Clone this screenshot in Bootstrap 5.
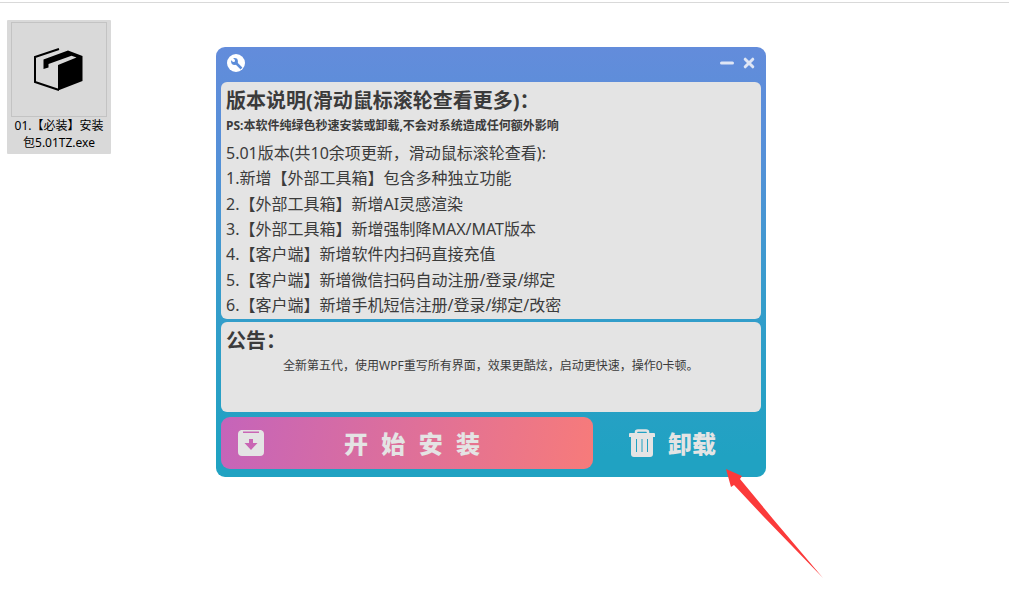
<!DOCTYPE html>
<html lang="zh-CN">
<head>
<meta charset="utf-8">
<meta name="viewport" content="width=device-width, initial-scale=1">
<title>安装程序</title>
<link href="https://cdn.jsdelivr.net/npm/bootstrap@5.3.0/dist/css/bootstrap.min.css" rel="stylesheet">
<style>
body { font-family: "Noto Sans", "Noto Sans CJK SC", sans-serif; color: #3b3b3b; background: #fff; padding-top: 2px; }
.desktop { border-top: 1px solid #d9d9d9; padding: 17px 7px; }
.desk-file { width: 104px; background: #d9d9d9; color: #000; font-size: 12px; line-height: 17px; padding: 2px 4px 3px; border-radius: 1px; }
.desk-file:hover { color: #000; }
.file-thumb { height: 95px; border: 1px solid #c3c3c3; }
.file-area { width: 209px; }
.installer { max-width: 550px; margin-top: 27px; padding: 0 5px 8px; border-radius: 9px; background: linear-gradient(#638cdb, #5590d8 25%, #349dcb 60%, #20a2c2 95%); }
.title-bar { height: 35px; padding: 0 1px 4px 6px; }
.win-btn { width: 22px; height: 22px; }
.pane { background: #e4e4e4; border-radius: 6px; padding: 5px 5px 0; }
.notes { height: 237px; margin-bottom: 3px; }
.notice { height: 90px; margin-bottom: 5px; }
.pane h1, .pane h2 { font-size: 20px; line-height: 28px; font-weight: 700; margin: 0; }
.promise { font-size: 12px; line-height: 22px; font-weight: 700; margin: 0 0 4px; }
.changes { font-size: 16px; line-height: 25px; height: 177px; }
.notice p { font-size: 12px; line-height: 18px; margin: 2px 0 0 57px; }
.act { height: 52px; border: 0; border-radius: 9px; color: #e4e4e4; font-family: "Liberation Sans", "Noto Sans CJK SC", sans-serif; font-size: 24px; line-height: 30px; font-weight: 900; }
.act:hover { color: #fff; }
.act-label { padding-top: 3px; }
.act-install { background: linear-gradient(100deg, #c564ba, #f77b7a); padding: 0 17px; }
.act-remove { padding: 0 45px 0 36px; gap: 13px; }
.pointer { left: 510px; top: 422px; pointer-events: none; }
</style>
</head>
<body class="d-flex flex-column min-vh-100">
<main class="desktop d-flex align-items-start flex-grow-1">
  <div class="file-area flex-shrink-0">
    <a href="#" class="desk-file d-block text-center text-decoration-none">
      <span class="file-thumb d-flex align-items-center justify-content-center">
        <svg width="52" height="46" viewBox="0 0 52 46" aria-hidden="true">
          <path d="M26 2 2 10V35L26 43" fill="none" stroke="#000" stroke-width="2"/>
          <path d="M10.500 12.500 35 3.500 49.500 9V34L25 43.500V18L43.500 10.500 38.500 8.800 15.500 17V20.500L10.500 22Z" fill="#000"/>
        </svg>
      </span>
      <span class="d-block">01.【必装】安装<br>包5.01TZ.exe</span>
    </a>
  </div>
  <section class="installer position-relative w-100">
    <header class="title-bar d-flex align-items-center">
      <svg class="me-auto" width="18" height="18" viewBox="0 0 18 18" aria-hidden="true">
        <circle cx="9" cy="9" r="9" fill="#fff"/>
        <circle cx="7.500" cy="7.500" r="3.400" fill="#5d8dd9"/>
        <path d="M8 8 14.500 14.500" stroke="#5d8dd9" stroke-width="2.500"/>
        <path d="M2.500 4.500 4.500 2.500 8 6 7.800 7.800 6 8Z" fill="#fff"/>
      </svg>
      <button type="button" class="win-btn btn p-0 border-0 d-flex align-items-center justify-content-center" aria-label="最小化">
        <svg width="14" height="12" viewBox="0 0 14 12"><path d="M1.500 6H12.500" stroke="#dfe6f5" stroke-width="3" stroke-linecap="round"/></svg>
      </button>
      <button type="button" class="win-btn btn p-0 border-0 d-flex align-items-center justify-content-center" aria-label="关闭">
        <svg width="12" height="12" viewBox="0 0 12 12"><path d="M2.200 2.200 9.800 9.800M9.800 2.200 2.200 9.800" stroke="#dfe6f5" stroke-width="3" stroke-linecap="round"/></svg>
      </button>
    </header>
    <article class="pane notes">
      <h1>版本说明(滑动鼠标滚轮查看更多)：</h1>
      <p class="promise">PS:本软件纯绿色秒速安装或卸载,不会对系统造成任何额外影响</p>
      <div class="changes d-flex flex-column justify-content-between">
        <div>5.01版本(共10余项更新，滑动鼠标滚轮查看):</div>
        <div>1.新增【外部工具箱】包含多种独立功能</div>
        <div>2.【外部工具箱】新增AI灵感渲染</div>
        <div>3.【外部工具箱】新增强制降MAX/MAT版本</div>
        <div>4.【客户端】新增软件内扫码直接充值</div>
        <div>5.【客户端】新增微信扫码自动注册/登录/绑定</div>
        <div>6.【客户端】新增手机短信注册/登录/绑定/改密</div>
      </div>
    </article>
    <article class="pane notice">
      <h2>公告：</h2>
      <p>全新第五代，使用WPF重写所有界面，效果更酷炫，启动更快速，操作0卡顿。</p>
    </article>
    <div class="row g-0">
      <div class="col">
        <button type="button" class="act act-install btn w-100 d-flex align-items-center">
          <svg width="26" height="26" viewBox="0 0 26 26" aria-hidden="true">
            <path fill="#e4e4e4" fill-rule="evenodd" d="M3 0H23Q26 1 26 4V22Q26 26 22 26H4Q0 26 0 22V4Q0 1 3 0ZM5 1.500V3H21V1.500ZM11 9V13H6.500L13 20 19.500 13H15V9Z"/>
          </svg>
          <span class="act-label flex-grow-1 text-center pe-3">开&nbsp;&nbsp;始&nbsp;&nbsp;安&nbsp;&nbsp;装</span>
        </button>
      </div>
      <div class="col-auto">
        <button type="button" class="act act-remove btn d-flex align-items-center">
          <svg width="26" height="28" viewBox="0 0 26 28" aria-hidden="true">
            <path d="M7 5V3Q7 1.500 9 1.500H17Q19 1.500 19 3V5" fill="none" stroke="#e4e4e4" stroke-width="2.500"/>
            <path d="M1 4H25Q26 4 26 5V8H0V5Q0 4 1 4Z" fill="#e4e4e4"/>
            <path fill="#e4e4e4" fill-rule="evenodd" d="M2 7H24V25Q24 28 21 28H5Q2 28 2 25ZM7 10V23H8V10ZM12.500 10V23H13.500V10ZM18 10V23H19V10Z"/>
          </svg>
          <span class="act-label">卸载</span>
        </button>
      </div>
    </div>
    <svg class="pointer position-absolute" width="98" height="110" viewBox="0 0 98 110" aria-hidden="true">
      <path d="M0 0 16 7 14 10 47 50 97 109 37 47 8 16 5 18Z" fill="#fb3a3a"/>
    </svg>
  </section>
</main>
<script src="https://cdn.jsdelivr.net/npm/bootstrap@5.3.0/dist/js/bootstrap.bundle.min.js"></script>
</body>
</html>
